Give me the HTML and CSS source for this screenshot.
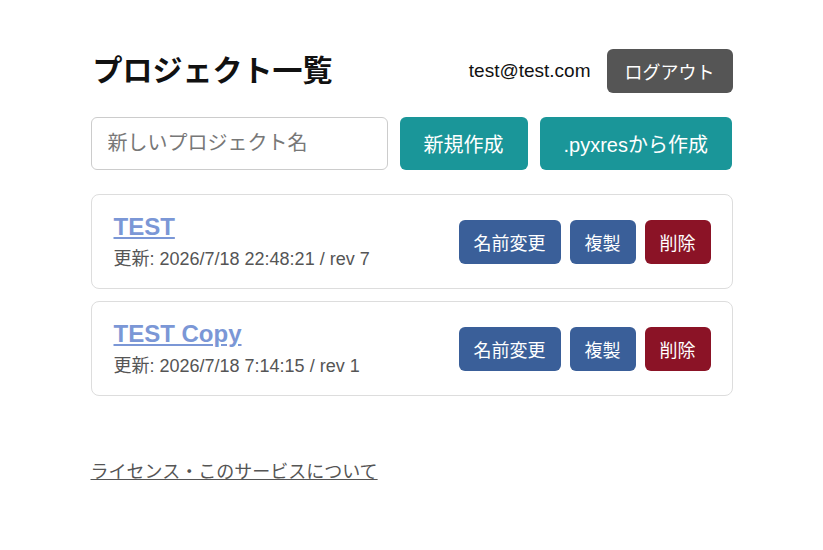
FILE: index.html
```html
<!DOCTYPE html>
<html lang="ja">
<head>
    <meta charset="UTF-8">
    <meta name="viewport" content="width=device-width, initial-scale=1.0">
    <title>プロジェクト一覧</title>
    <link rel="stylesheet" href="styles.css">
</head>
<body>
    <div class="page">
        <header class="header">
            <h1>プロジェクト一覧</h1>
            <div class="user">
                <span class="email">test@test.com</span>
                <button class="btn btn-dark">ログアウト</button>
            </div>
        </header>

        <div class="create-row">
            <input type="text" class="name-input" placeholder="新しいプロジェクト名">
            <button class="btn btn-teal">新規作成</button>
            <button class="btn btn-teal">.pyxresから作成</button>
        </div>

        <ul class="project-list">
            <li class="project">
                <div class="project-info">
                    <a href="#" class="project-name">TEST</a>
                    <div class="project-meta">更新: 2026/7/18 22:48:21 / rev 7</div>
                </div>
                <div class="project-actions">
                    <button class="btn btn-small btn-blue">名前変更</button>
                    <button class="btn btn-small btn-blue">複製</button>
                    <button class="btn btn-small btn-red">削除</button>
                </div>
            </li>
            <li class="project">
                <div class="project-info">
                    <a href="#" class="project-name">TEST Copy</a>
                    <div class="project-meta">更新: 2026/7/18 7:14:15 / rev 1</div>
                </div>
                <div class="project-actions">
                    <button class="btn btn-small btn-blue">名前変更</button>
                    <button class="btn btn-small btn-blue">複製</button>
                    <button class="btn btn-small btn-red">削除</button>
                </div>
            </li>
        </ul>

        <footer class="footer">
            <a href="#">ライセンス・このサービスについて</a>
        </footer>
    </div>
</body>
</html>
```

FILE: styles.css
```css
:root {
    --teal: #1a9699;
    --blue: #3a5f99;
    --red: #8b1326;
    --dark: #555555;
    --text-muted: #555555;
}

* {
    box-sizing: border-box;
    margin: 0;
    padding: 0;
}

body {
    font-family: "Liberation Sans", Arial, "Noto Sans CJK JP", sans-serif;
    color: #111;
    background: #fff;
}

.page {
    width: 642px;
    margin: 49px auto 0;
}

/* ヘッダー */
.header {
    display: flex;
    justify-content: space-between;
    align-items: center;
}

h1 {
    font-size: 30px;
    font-weight: bold;
    line-height: 44px;
    padding-left: 2px;
}

.user {
    display: flex;
    align-items: center;
    gap: 16px;
}

.email {
    font-size: 19px;
}

/* ボタン共通 */
.btn {
    font-family: inherit;
    border: none;
    border-radius: 6px;
    color: #fff;
    cursor: pointer;
    height: 44px;
    font-size: 18px;
    padding: 0 18px;
}

.btn-dark {
    background: var(--dark);
}

.btn-teal {
    background: var(--teal);
    font-size: 20px;
    height: 53px;
    padding: 0 24px;
}

.btn-small {
    padding: 0 15px;
}

.btn-blue {
    background: var(--blue);
}

.btn-red {
    background: var(--red);
}

/* 新規作成 */
.create-row {
    display: flex;
    gap: 12px;
    margin-top: 24px;
}

.name-input {
    width: 297px;
    height: 53px;
    border: 1px solid #ccc;
    border-radius: 6px;
    padding: 0 16px;
    font-family: inherit;
    font-size: 20px;
}

.name-input::placeholder {
    color: #777;
}

/* プロジェクト一覧 */
.project-list {
    list-style: none;
    display: flex;
    flex-direction: column;
    gap: 12px;
    margin-top: 24px;
}

.project {
    display: flex;
    justify-content: space-between;
    align-items: center;
    border: 1px solid #ddd;
    border-radius: 8px;
    padding: 17px 21px 17px 22px;
}

.project-name {
    font-size: 24px;
    font-weight: bold;
    line-height: 29px;
    color: #7b97d6;
}

.project-meta {
    font-size: 18px;
    line-height: 24px;
    margin-top: 6px;
    color: var(--text-muted);
}

.project-actions {
    display: flex;
    gap: 9px;
}

.footer {
    margin-top: 61px;
    font-size: 18px;
}

.footer a {
    color: var(--text-muted);
}
```
